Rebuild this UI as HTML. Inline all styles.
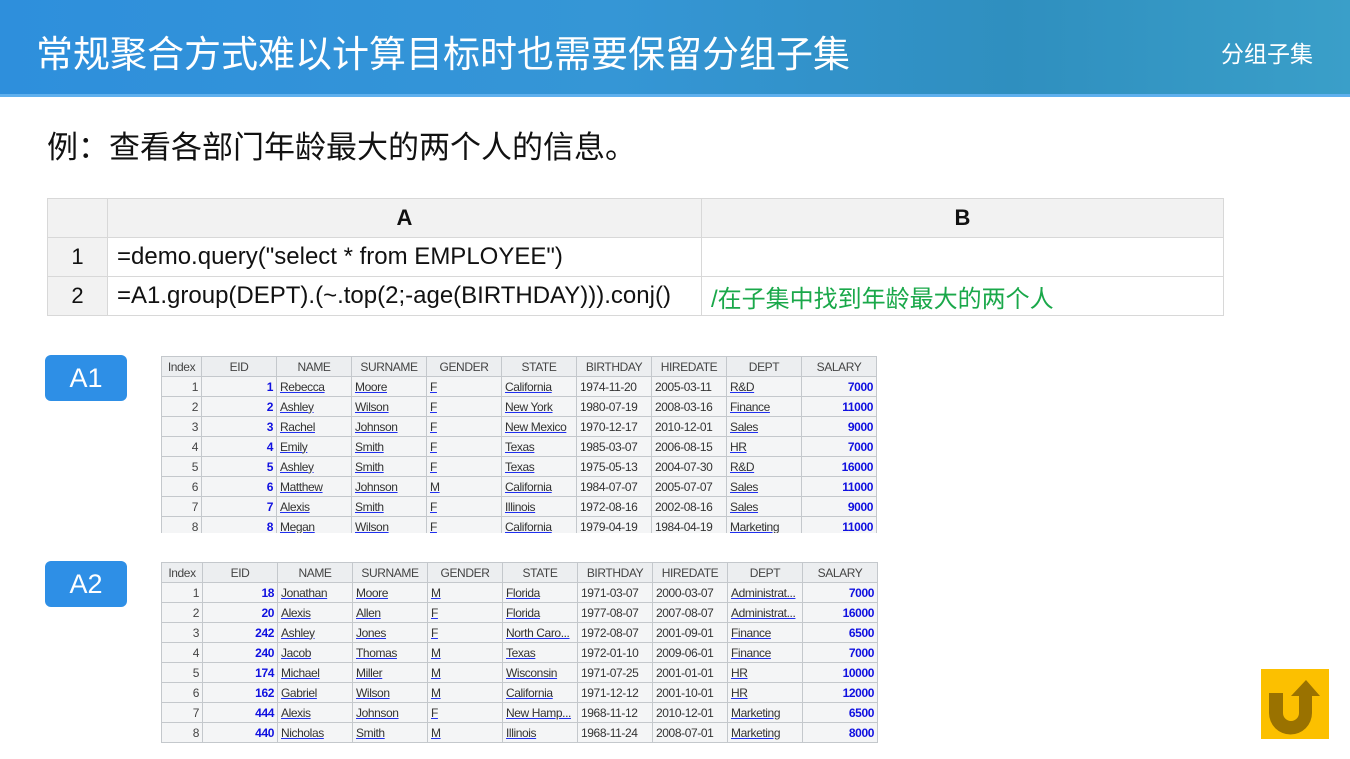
<!DOCTYPE html>
<html><head><meta charset="utf-8"><style>
*{margin:0;padding:0;box-sizing:border-box}
body{width:1350px;height:759px;background:#fff;position:relative;overflow:hidden;font-family:"Liberation Sans","Noto Sans CJK SC",sans-serif}
.hdr{position:absolute;left:0;top:0;width:1350px;height:97px;background:linear-gradient(90deg,#2e8fdc 0%,#3596d6 45%,#2f8fbf 75%,#3a9fc9 100%);border-bottom:3px solid #5fb0ee}
.hdr .t{position:absolute;left:36px;top:24px;font-size:37px;color:#fff}
.hdr .s{position:absolute;left:1221px;top:35px;font-size:23px;color:#fff}
.q{position:absolute;left:47px;top:122px;font-size:31px;color:#111}
table{border-collapse:collapse;table-layout:fixed}
.code{position:absolute;left:47px;top:198px;font-size:24px;color:#111}
.code td{border:1px solid #d8d8d8;height:39px;padding:0 0 0 9px;white-space:nowrap}
.code tr:first-child td{background:#f2f2f2;font-weight:bold;text-align:center;padding:0;font-size:22px}
.code td.n{background:#f2f2f2;text-align:center;padding:0;font-size:22px}
.g{color:#1aa84a}
.lbl{position:absolute;left:45px;width:82px;height:46px;background:#2e8fe6;border-radius:6px;color:#fff;font-size:27px;text-align:center;line-height:46px}
.wrap{position:absolute;overflow:hidden}
.dt{font-size:12px;color:#333;letter-spacing:-0.4px}
.dt td{border:1px solid #c4c8cc;height:20px;padding:0 3px;white-space:nowrap;overflow:hidden;background:#f4f5f6}
.dt tr:first-child td{text-align:center;background:#eceef0;color:#444}
.dt td.i{text-align:right;color:#444}
.dt td.u span{text-decoration:underline;text-decoration-color:#2030f0;color:#333}
.dt td.r{text-align:right;color:#1010e0;font-weight:bold}
.icon{position:absolute;left:1261px;top:669px;width:68px;height:70px;background:#fcc000}
</style></head><body>
<div class="hdr"><div class="t">常规聚合方式难以计算目标时也需要保留分组子集</div><div class="s">分组子集</div></div>
<div class="q">例：查看各部门年龄最大的两个人的信息。</div>
<table class="code" style="width:1176px"><colgroup><col style="width:60px"><col style="width:594px"><col style="width:522px"></colgroup>
<tr><td></td><td>A</td><td>B</td></tr>
<tr><td class="n">1</td><td>=demo.query("select * from EMPLOYEE")</td><td></td></tr>
<tr><td class="n">2</td><td>=A1.group(DEPT).(~.top(2;-age(BIRTHDAY))).conj()</td><td class="g">/在子集中找到年龄最大的两个人</td></tr>
</table>
<div class="lbl" style="top:355px">A1</div>
<div class="lbl" style="top:561px">A2</div>
<div class="wrap" style="left:161px;top:356px;width:716px;height:177px">
<table class="dt" style="width:715px"><colgroup><col style="width:40px"><col style="width:75px"><col style="width:75px"><col style="width:75px"><col style="width:75px"><col style="width:75px"><col style="width:75px"><col style="width:75px"><col style="width:75px"><col style="width:75px"></colgroup>
<tr><td>Index</td><td>EID</td><td>NAME</td><td>SURNAME</td><td>GENDER</td><td>STATE</td><td>BIRTHDAY</td><td>HIREDATE</td><td>DEPT</td><td>SALARY</td></tr>
<tr><td class="i">1</td><td class="r">1</td><td class="u"><span>Rebecca</span></td><td class="u"><span>Moore</span></td><td class="u"><span>F</span></td><td class="u"><span>California</span></td><td>1974-11-20</td><td>2005-03-11</td><td class="u"><span>R&amp;D</span></td><td class="r">7000</td></tr>
<tr><td class="i">2</td><td class="r">2</td><td class="u"><span>Ashley</span></td><td class="u"><span>Wilson</span></td><td class="u"><span>F</span></td><td class="u"><span>New York</span></td><td>1980-07-19</td><td>2008-03-16</td><td class="u"><span>Finance</span></td><td class="r">11000</td></tr>
<tr><td class="i">3</td><td class="r">3</td><td class="u"><span>Rachel</span></td><td class="u"><span>Johnson</span></td><td class="u"><span>F</span></td><td class="u"><span>New Mexico</span></td><td>1970-12-17</td><td>2010-12-01</td><td class="u"><span>Sales</span></td><td class="r">9000</td></tr>
<tr><td class="i">4</td><td class="r">4</td><td class="u"><span>Emily</span></td><td class="u"><span>Smith</span></td><td class="u"><span>F</span></td><td class="u"><span>Texas</span></td><td>1985-03-07</td><td>2006-08-15</td><td class="u"><span>HR</span></td><td class="r">7000</td></tr>
<tr><td class="i">5</td><td class="r">5</td><td class="u"><span>Ashley</span></td><td class="u"><span>Smith</span></td><td class="u"><span>F</span></td><td class="u"><span>Texas</span></td><td>1975-05-13</td><td>2004-07-30</td><td class="u"><span>R&amp;D</span></td><td class="r">16000</td></tr>
<tr><td class="i">6</td><td class="r">6</td><td class="u"><span>Matthew</span></td><td class="u"><span>Johnson</span></td><td class="u"><span>M</span></td><td class="u"><span>California</span></td><td>1984-07-07</td><td>2005-07-07</td><td class="u"><span>Sales</span></td><td class="r">11000</td></tr>
<tr><td class="i">7</td><td class="r">7</td><td class="u"><span>Alexis</span></td><td class="u"><span>Smith</span></td><td class="u"><span>F</span></td><td class="u"><span>Illinois</span></td><td>1972-08-16</td><td>2002-08-16</td><td class="u"><span>Sales</span></td><td class="r">9000</td></tr>
<tr><td class="i">8</td><td class="r">8</td><td class="u"><span>Megan</span></td><td class="u"><span>Wilson</span></td><td class="u"><span>F</span></td><td class="u"><span>California</span></td><td>1979-04-19</td><td>1984-04-19</td><td class="u"><span>Marketing</span></td><td class="r">11000</td></tr>
</table></div>
<div class="wrap" style="left:161px;top:562px;width:717px;height:181px">
<table class="dt" style="width:716px"><colgroup><col style="width:41px"><col style="width:75px"><col style="width:75px"><col style="width:75px"><col style="width:75px"><col style="width:75px"><col style="width:75px"><col style="width:75px"><col style="width:75px"><col style="width:75px"></colgroup>
<tr><td>Index</td><td>EID</td><td>NAME</td><td>SURNAME</td><td>GENDER</td><td>STATE</td><td>BIRTHDAY</td><td>HIREDATE</td><td>DEPT</td><td>SALARY</td></tr>
<tr><td class="i">1</td><td class="r">18</td><td class="u"><span>Jonathan</span></td><td class="u"><span>Moore</span></td><td class="u"><span>M</span></td><td class="u"><span>Florida</span></td><td>1971-03-07</td><td>2000-03-07</td><td class="u"><span>Administrat...</span></td><td class="r">7000</td></tr>
<tr><td class="i">2</td><td class="r">20</td><td class="u"><span>Alexis</span></td><td class="u"><span>Allen</span></td><td class="u"><span>F</span></td><td class="u"><span>Florida</span></td><td>1977-08-07</td><td>2007-08-07</td><td class="u"><span>Administrat...</span></td><td class="r">16000</td></tr>
<tr><td class="i">3</td><td class="r">242</td><td class="u"><span>Ashley</span></td><td class="u"><span>Jones</span></td><td class="u"><span>F</span></td><td class="u"><span>North Caro...</span></td><td>1972-08-07</td><td>2001-09-01</td><td class="u"><span>Finance</span></td><td class="r">6500</td></tr>
<tr><td class="i">4</td><td class="r">240</td><td class="u"><span>Jacob</span></td><td class="u"><span>Thomas</span></td><td class="u"><span>M</span></td><td class="u"><span>Texas</span></td><td>1972-01-10</td><td>2009-06-01</td><td class="u"><span>Finance</span></td><td class="r">7000</td></tr>
<tr><td class="i">5</td><td class="r">174</td><td class="u"><span>Michael</span></td><td class="u"><span>Miller</span></td><td class="u"><span>M</span></td><td class="u"><span>Wisconsin</span></td><td>1971-07-25</td><td>2001-01-01</td><td class="u"><span>HR</span></td><td class="r">10000</td></tr>
<tr><td class="i">6</td><td class="r">162</td><td class="u"><span>Gabriel</span></td><td class="u"><span>Wilson</span></td><td class="u"><span>M</span></td><td class="u"><span>California</span></td><td>1971-12-12</td><td>2001-10-01</td><td class="u"><span>HR</span></td><td class="r">12000</td></tr>
<tr><td class="i">7</td><td class="r">444</td><td class="u"><span>Alexis</span></td><td class="u"><span>Johnson</span></td><td class="u"><span>F</span></td><td class="u"><span>New Hamp...</span></td><td>1968-11-12</td><td>2010-12-01</td><td class="u"><span>Marketing</span></td><td class="r">6500</td></tr>
<tr><td class="i">8</td><td class="r">440</td><td class="u"><span>Nicholas</span></td><td class="u"><span>Smith</span></td><td class="u"><span>M</span></td><td class="u"><span>Illinois</span></td><td>1968-11-24</td><td>2008-07-01</td><td class="u"><span>Marketing</span></td><td class="r">8000</td></tr>
</table></div>
<div class="icon"><svg width="68" height="70" viewBox="0 0 68 70"><path d="M8 24 H22 V44 A8 8 0 0 0 38 44 V27 H30 L45 11 L59 27 H51 V44 A21.5 21.5 0 0 1 8 44 Z" fill="#9a7200"/></svg></div>
</body></html>
